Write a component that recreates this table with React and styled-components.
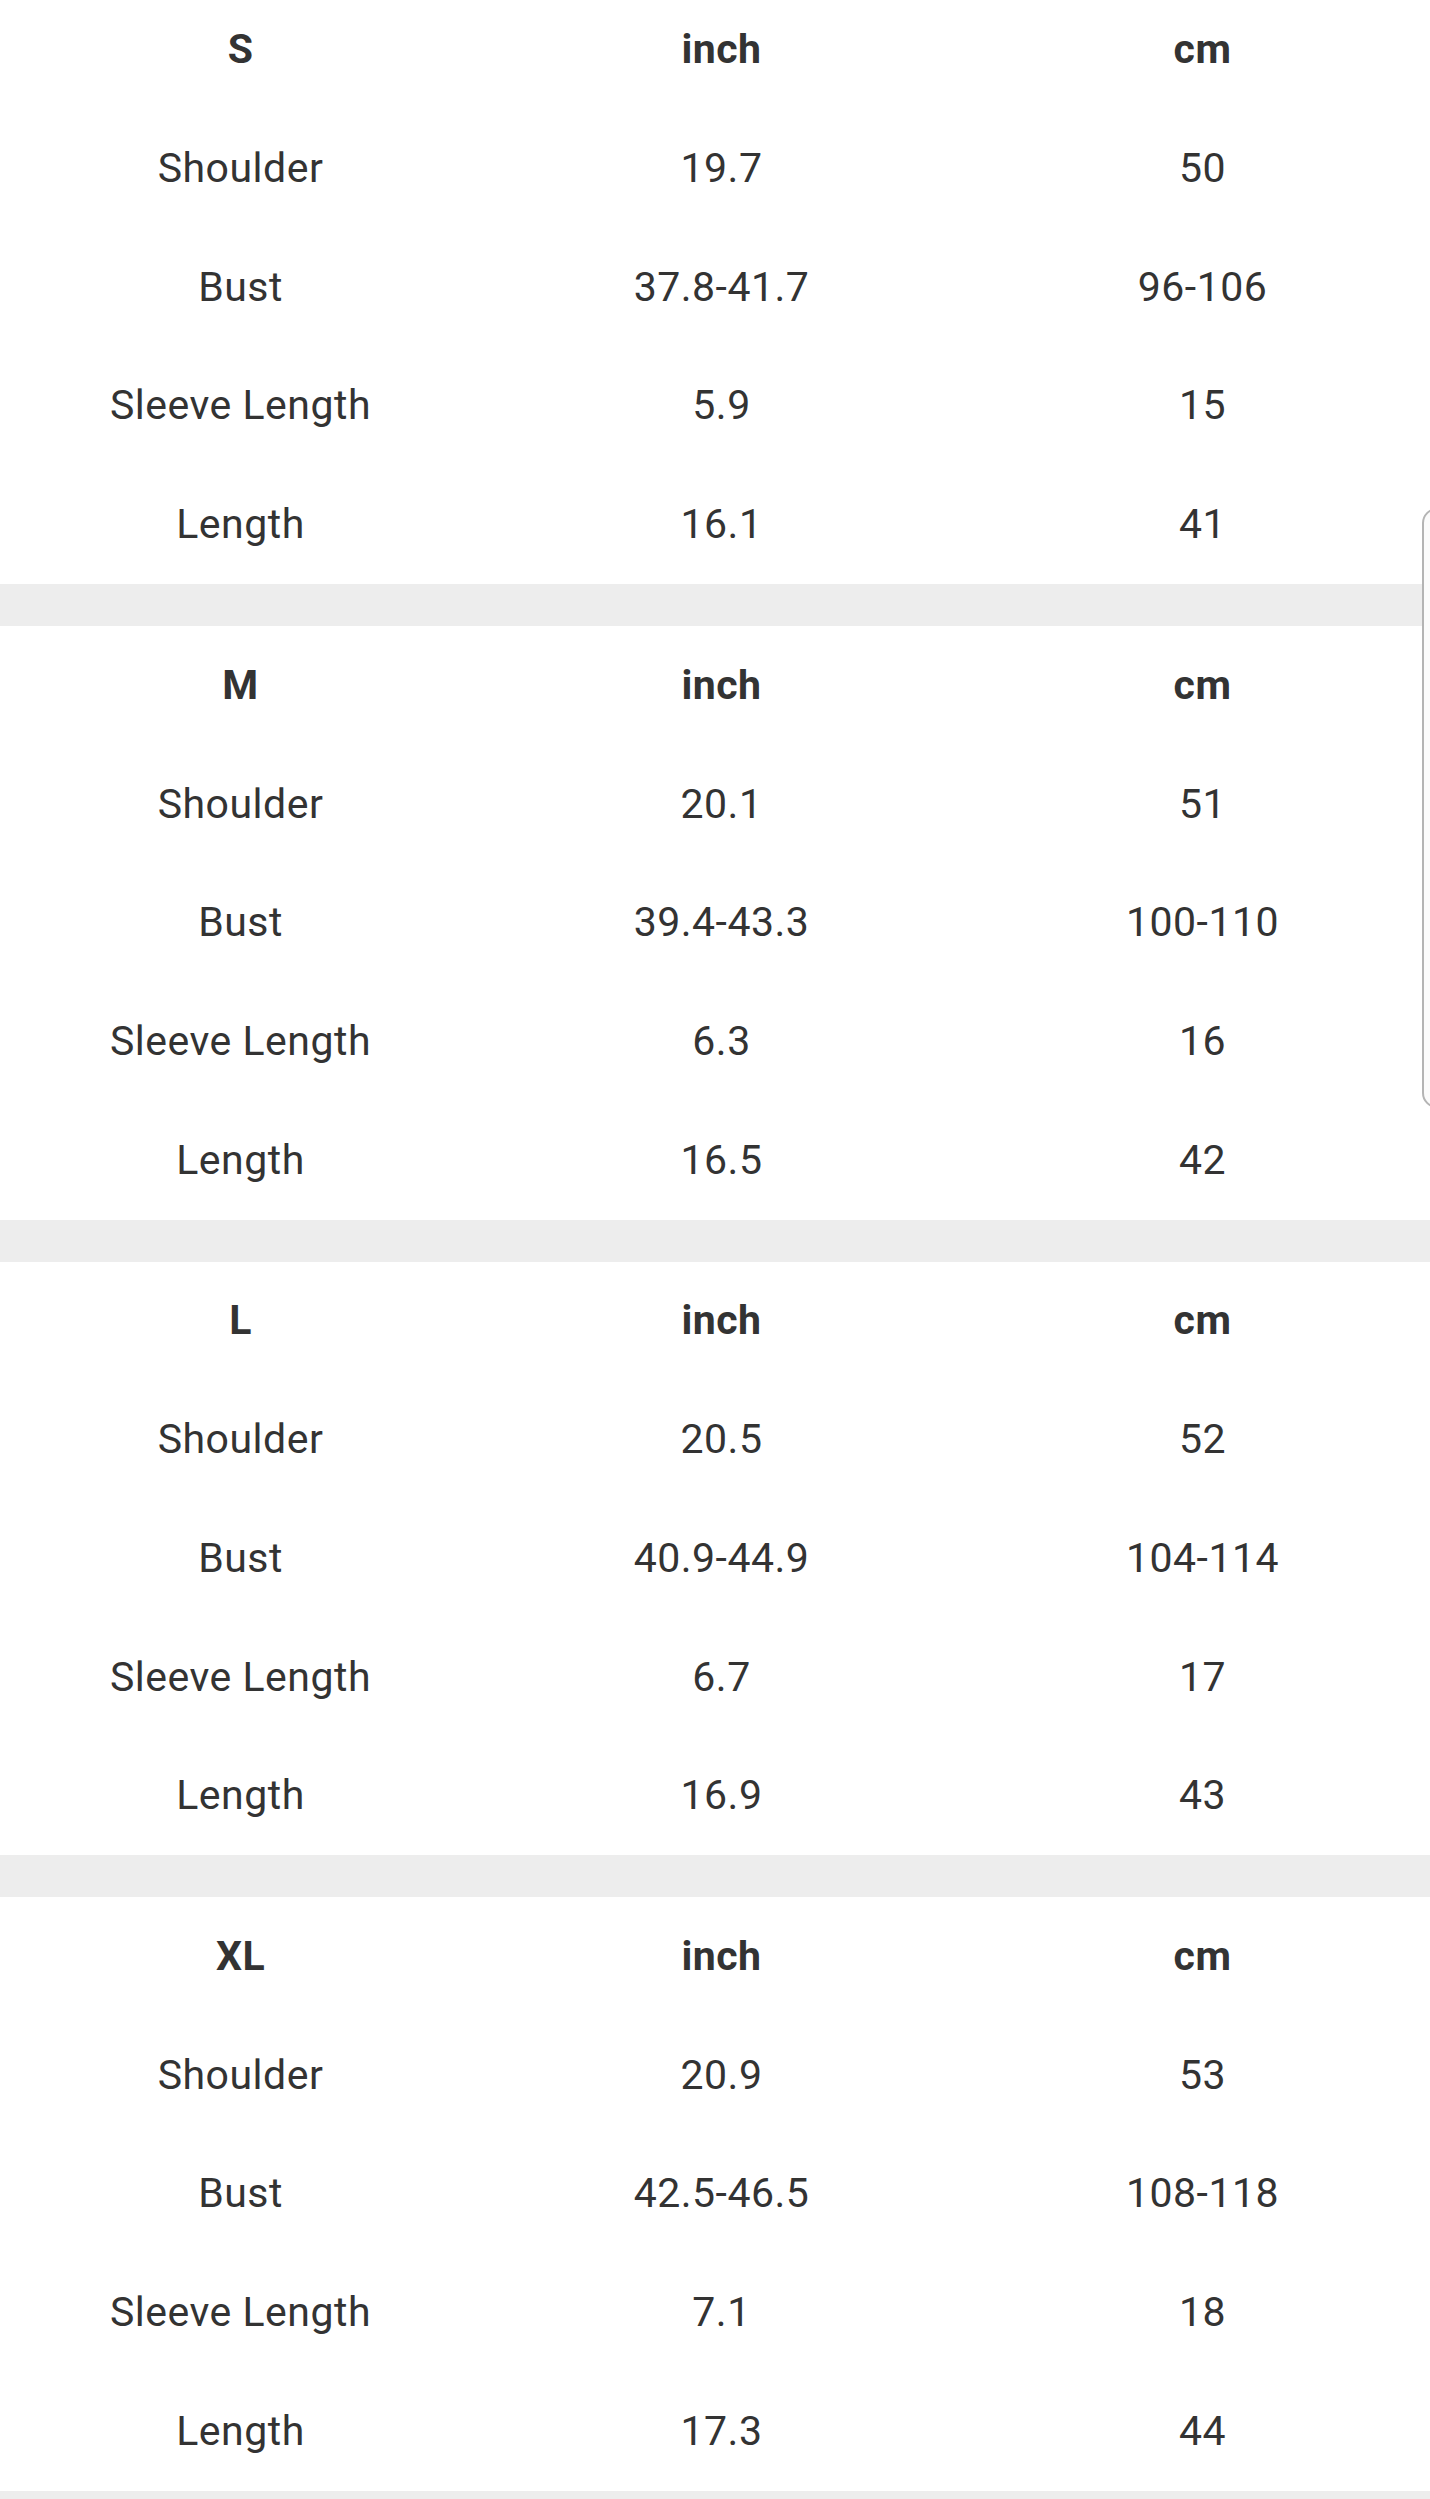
import React from "react";
import styled, { createGlobalStyle } from "styled-components";

const Global = createGlobalStyle`
  html, body {
    margin: 0;
    padding: 0;
    background: #ffffff;
    overflow-x: hidden;
  }
  body {
    font-family: Roboto, "Noto Sans", "Liberation Sans", sans-serif;
    color: #333333;
  }
`;

const Page = styled.div`
  position: relative;
  width: 1430px;
  overflow: hidden;
`;

const Sheet = styled.div`
  width: 1443px;
  margin-top: -9.67px;
  display: flex;
  flex-direction: column;
`;

const SizeBlock = styled.section`
  display: flex;
  flex-direction: column;
`;

const Row = styled.div`
  display: grid;
  grid-template-columns: repeat(3, 481px);
  height: 118.73px;
  align-items: center;
`;

const Cell = styled.div`
  text-align: center;
  font-size: 41px;
  letter-spacing: 0.5px;
  line-height: 1;
  font-weight: ${(p) => (p.$head ? 700 : 400)};
  color: #333333;
  white-space: nowrap;
`;

const Divider = styled.div`
  height: 42px;
  background: #ededed;
`;

const EdgeHandle = styled.div`
  position: absolute;
  left: 1422px;
  top: 508px;
  width: 30px;
  height: 600px;
  box-sizing: border-box;
  border: 2px solid #b4b4b4;
  border-radius: 16px;
  background: #fbfbfb;
`;

const data = [
  {
    size: "S",
    rows: [
      ["Shoulder", "19.7", "50"],
      ["Bust", "37.8-41.7", "96-106"],
      ["Sleeve Length", "5.9", "15"],
      ["Length", "16.1", "41"],
    ],
  },
  {
    size: "M",
    rows: [
      ["Shoulder", "20.1", "51"],
      ["Bust", "39.4-43.3", "100-110"],
      ["Sleeve Length", "6.3", "16"],
      ["Length", "16.5", "42"],
    ],
  },
  {
    size: "L",
    rows: [
      ["Shoulder", "20.5", "52"],
      ["Bust", "40.9-44.9", "104-114"],
      ["Sleeve Length", "6.7", "17"],
      ["Length", "16.9", "43"],
    ],
  },
  {
    size: "XL",
    rows: [
      ["Shoulder", "20.9", "53"],
      ["Bust", "42.5-46.5", "108-118"],
      ["Sleeve Length", "7.1", "18"],
      ["Length", "17.3", "44"],
    ],
  },
];

export default function App() {
  return (
    <>
      <Global />
      <Page>
        <Sheet>
          {data.map((block) => (
            <React.Fragment key={block.size}>
              <SizeBlock>
                <Row>
                  <Cell $head>{block.size}</Cell>
                  <Cell $head>inch</Cell>
                  <Cell $head>cm</Cell>
                </Row>
                {block.rows.map((r) => (
                  <Row key={r[0]}>
                    {r.map((v, i) => (
                      <Cell key={i}>{v}</Cell>
                    ))}
                  </Row>
                ))}
              </SizeBlock>
              <Divider />
            </React.Fragment>
          ))}
        </Sheet>
        <EdgeHandle />
      </Page>
    </>
  );
}
